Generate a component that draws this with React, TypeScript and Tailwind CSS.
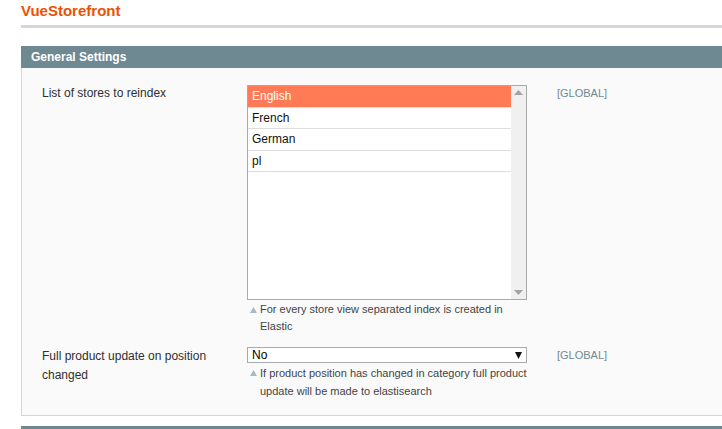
const stores = ['English', 'French', 'German', 'pl'];

function Note({ children, leading }: { children: React.ReactNode; leading: string }) {
  return (
    <div className={`flex whitespace-nowrap pl-[3px] pt-[1px] text-[11px] text-[#444] ${leading}`}>
      <svg className="mr-[3px] mt-[6px] shrink-0" width="7" height="6" viewBox="0 0 7 6">
        <path d="M0 6 L3.5 0 L7 6 Z" fill="#a9b9c2" />
      </svg>
      <span>{children}</span>
    </div>
  );
}

export default function App() {
  const selected = 'English';
  return (
    <div className="w-[722px] h-[429px] overflow-hidden bg-white font-['Liberation_Sans',Arial,sans-serif]">
      <div className="pl-[21px]">
        <h1 className="pt-[1px] text-[15px] font-bold leading-[20px] text-[#eb5202]">VueStorefront</h1>
        <div className="mt-[4px] h-[3px] bg-[#d6d6d6]" />

        <div className="mt-[18px] flex h-[22px] items-center bg-[#6f8992] px-[10px] text-[12px] font-bold text-white">
          General Settings
        </div>

        <div className="h-[348px] border-b border-l border-[#d6d6d6] bg-[#fafafa] text-[12px] text-[#2f2f2f]">
          <div className="flex pt-[17px]">
            <div className="w-[225px] pl-[20px] leading-[17px]">List of stores to reindex</div>
            <div className="w-[280px]">
              <div className="flex h-[215px] border border-[#aaa] bg-white">
                <div className="flex-1">
                  {stores.map((s) => (
                    <div
                      key={s}
                      className={`h-[21.5px] border-b border-[#dedede] pl-[4px] text-[12px] leading-[20px] ${
                        s === selected ? 'bg-[#ff7a55] text-white' : 'text-[#111]'
                      }`}
                    >
                      {s}
                    </div>
                  ))}
                </div>
                <div className="flex w-[15px] flex-col items-center justify-between bg-[#f0f0f0] py-[4px]">
                  <svg width="9" height="5" viewBox="0 0 9 5"><path d="M0 5 L4.5 0 L9 5 Z" fill="#a3a3a3" /></svg>
                  <svg width="9" height="5" viewBox="0 0 9 5"><path d="M0 0 L4.5 5 L9 0 Z" fill="#a3a3a3" /></svg>
                </div>
              </div>
              <Note leading="leading-[17px]">
                For every store view separated index is created in
                <br />
                Elastic
              </Note>
            </div>
            <div className="pl-[30px] text-[11px] leading-[17px] text-[#6f8992]">[GLOBAL]</div>
          </div>

          <div className="flex pt-[12px]">
            <div className="w-[225px] pl-[20px] leading-[19px]">
              Full product update on position
              <br />
              changed
            </div>
            <div className="w-[280px]">
              <div className="flex h-[16px] items-center justify-between border border-[#aaa] bg-white pl-[4px] pr-[4px] text-[12px] text-black">
                <span>No</span>
                <svg width="7" height="7" viewBox="0 0 7 7"><path d="M0 0 L7 0 L3.5 7 Z" fill="#111" /></svg>
              </div>
              <Note leading="leading-[18px]">
                If product position has changed in category full product
                <br />
                update will be made to elastisearch
              </Note>
            </div>
            <div className="pl-[30px] text-[11px] leading-[17px] text-[#6f8992]">[GLOBAL]</div>
          </div>
        </div>

        <div className="mt-[10px] h-[22px] bg-[#6f8992]" />
      </div>
    </div>
  );
}
